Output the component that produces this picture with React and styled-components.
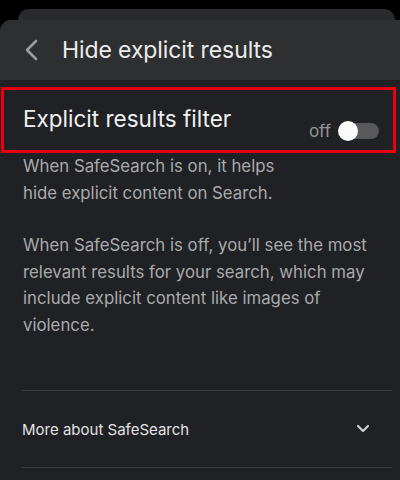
import React from "react";
import styled, { createGlobalStyle } from "styled-components";

const Global = createGlobalStyle`
  html, body {
    margin: 0;
    padding: 0;
    background: #000;
  }
  body {
    font-family: Inter, "Liberation Sans", Arial, sans-serif;
    -webkit-font-smoothing: antialiased;
  }
`;

const Screen = styled.div`
  width: 400px;
  height: 480px;
  overflow: hidden;
  background: #000;
  padding-top: 9px;
  box-sizing: border-box;
`;

const BackSheet = styled.div`
  height: 11px;
  margin: 0 5px 0 18px;
  background: #2a2a2c;
  border-radius: 11px 11px 0 0;
`;

const Sheet = styled.div`
  margin-right: -14px;
  height: 460px;
  background: #202124;
  border-radius: 11px 11px 0 0;
  overflow: hidden;
`;

const Header = styled.div`
  height: 60px;
  display: flex;
  align-items: center;
  gap: 22px;
  padding-left: 24px;
  background: #2e2f31;
  color: #ececec;
  font-size: 23px;
  letter-spacing: -0.1px;
`;

const Content = styled.div`
  width: 400px;
`;

const FilterBox = styled.div`
  margin: 7px 0 0 1px;
  width: 395px;
  height: 66px;
  box-sizing: border-box;
  border: 3px solid #ea0010;
  display: flex;
  justify-content: space-between;
  padding: 0 14px 0 19px;
`;

const FilterTitle = styled.div`
  align-self: center;
  margin-top: -4px;
  font-size: 22.5px;
  color: #f0f0f0;
`;

const ToggleWrap = styled.div`
  align-self: flex-end;
  margin-bottom: 9px;
  display: flex;
  align-items: center;
  gap: 8px;
`;

const OffLabel = styled.span`
  font-size: 17px;
  color: #959597;
`;

const Track = styled.div`
  position: relative;
  width: 40px;
  height: 16px;
  border-radius: 8px;
  background: #59595b;
`;

const Knob = styled.div`
  position: absolute;
  left: -1px;
  top: -2px;
  width: 20px;
  height: 20px;
  border-radius: 50%;
  background: #fafafa;
`;

const Description = styled.div`
  padding: 0 0 0 23px;
  width: 362px;
  font-size: 16.8px;
  line-height: 26.5px;
  color: #a9aaac;
`;

const Para = styled.p`
  margin: 0 0 26px;
`;

const Divider = styled.div`
  height: 1px;
  margin: 0 8px 0 22px;
  background: #3a3a3c;
`;

const MoreRow = styled.div`
  height: 76px;
  display: flex;
  align-items: center;
  justify-content: space-between;
  padding: 0 30px 0 22px;
  font-size: 15px;
  color: #e2e2e2;
`;

function BackIcon() {
  return (
    <svg width="16" height="22" viewBox="0 0 16 22">
      <path d="M12 2 L3 11 L12 20" fill="none" stroke="#9c9c9e" strokeWidth="2.6" strokeLinecap="round" strokeLinejoin="round" />
    </svg>
  );
}

function ChevronDown() {
  return (
    <svg width="14" height="10" viewBox="0 0 14 10">
      <path d="M2 2 L7 7 L12 2" fill="none" stroke="#cfcfd1" strokeWidth="2.2" strokeLinecap="round" strokeLinejoin="round" />
    </svg>
  );
}

export default function App() {
  return (
    <Screen>
      <Global />
      <BackSheet />
      <Sheet>
        <Header>
          <BackIcon />
          <span>Hide explicit results</span>
        </Header>
        <Content>
          <FilterBox>
            <FilterTitle>Explicit results filter</FilterTitle>
            <ToggleWrap>
              <OffLabel>off</OffLabel>
              <Track>
                <Knob />
              </Track>
            </ToggleWrap>
          </FilterBox>
          <Description>
            <Para>
              When SafeSearch is on, it helps
              <br />
              hide explicit content on Search.
            </Para>
            <Para>
              When SafeSearch is off, you’ll see the most relevant results for your search, which may include explicit content like images of violence.
            </Para>
          </Description>
          <div style={{ height: 26 }} />
          <Divider />
          <MoreRow>
            <span>More about SafeSearch</span>
            <ChevronDown />
          </MoreRow>
          <Divider />
        </Content>
      </Sheet>
    </Screen>
  );
}
